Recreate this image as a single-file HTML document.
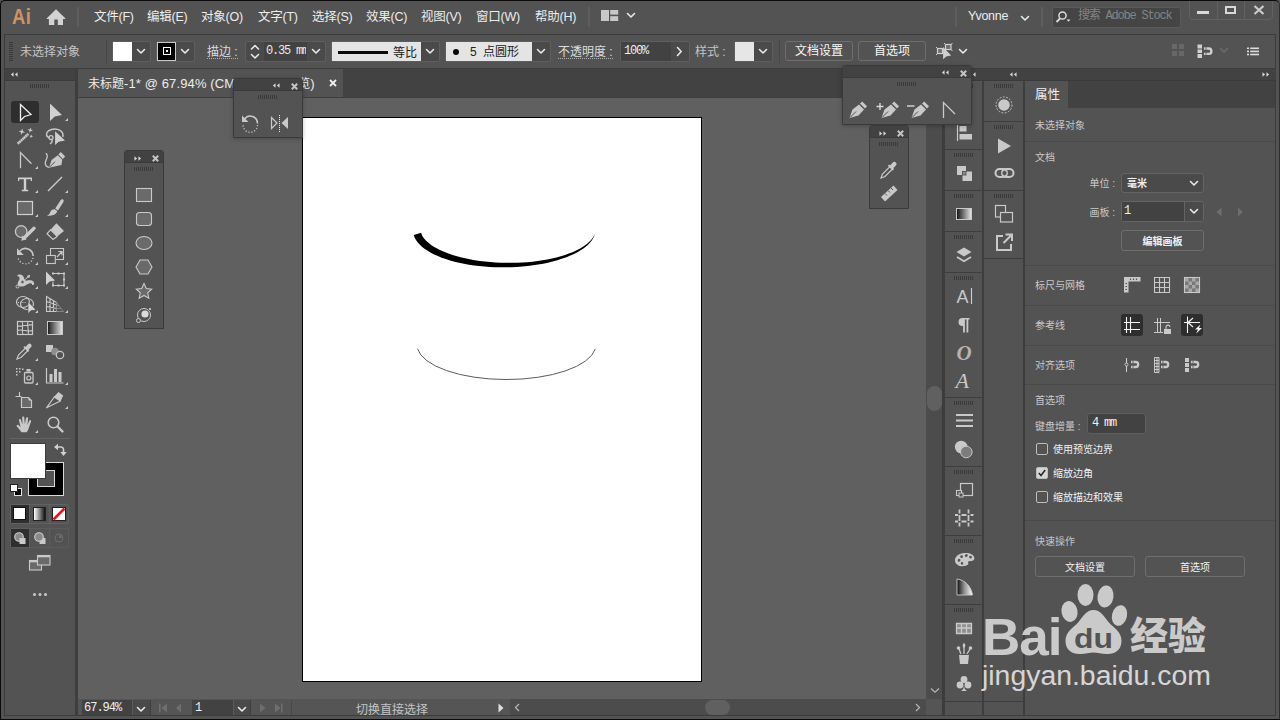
<!DOCTYPE html>
<html lang="zh-CN">
<head>
<meta charset="utf-8">
<title>Adobe Illustrator</title>
<style>
*{box-sizing:border-box;margin:0;padding:0}
html,body{width:1280px;height:720px;overflow:hidden;background:#535353}
body{position:relative;font-family:"Liberation Sans","Noto Sans CJK SC",sans-serif;font-size:12px;color:#dcdcdc;-webkit-font-smoothing:antialiased}
.abs{position:absolute}
div,span,svg{position:absolute}
.t{white-space:nowrap;line-height:1}
.menu{font-size:12.5px;color:#ececec;top:11px;letter-spacing:-.25px}
.sep{width:2px;background:#5e5e5e}
.grip{height:4px;background:repeating-linear-gradient(90deg,#3a3a3a 0 1px,transparent 1px 2px)}
.hdr{background:#424242}
.ddb{background:#4a4a4a;border:1px solid #5e5e5e;border-radius:2px}
.chev{fill:none;stroke:#e8e8e8;stroke-width:1.6;stroke-linecap:round;stroke-linejoin:round}
.ic{fill:#c8c8c8}
.ln{fill:none;stroke:#c8c8c8;stroke-width:1.3}
</style>
</head>
<body>
<!-- window frame -->
<div id="frame" style="left:0;top:0;width:1280px;height:720px;background:#535353"></div>

<!-- ===== MENU BAR ===== -->
<div id="menubar" style="left:0;top:0;width:1280px;height:34px;background:#535353">
  <span class="t" style="left:11.8px;top:5.5px;font-size:22.5px;color:#cf9263;font-weight:bold;transform:scaleX(.82);transform-origin:0 0;letter-spacing:.5px">Ai</span>
  <svg style="left:46px;top:9px" width="20" height="17" viewBox="0 0 20 17"><path d="M10 .300 L19.300 9.200 V10 H17 V16 H11.800 V10.500 H8.300 V16 H2.900 V10 H.800 V9.200 Z" fill="#d2d2d2"/></svg>
  <div class="sep" style="left:77px;top:7px;height:20px"></div>
  <span class="t menu" style="left:94px">文件(F)</span>
  <span class="t menu" style="left:147px">编辑(E)</span>
  <span class="t menu" style="left:201px">对象(O)</span>
  <span class="t menu" style="left:258px">文字(T)</span>
  <span class="t menu" style="left:312px">选择(S)</span>
  <span class="t menu" style="left:366px">效果(C)</span>
  <span class="t menu" style="left:421px">视图(V)</span>
  <span class="t menu" style="left:476px">窗口(W)</span>
  <span class="t menu" style="left:535px">帮助(H)</span>
  <div class="sep" style="left:588px;top:7px;height:20px"></div>
  <svg style="left:601px;top:10px" width="18" height="12" viewBox="0 0 18 12"><rect x="0" y="0" width="8" height="11" fill="#c8c8c8"/><rect x="9.200" y="0" width="8" height="4.600" fill="#c8c8c8"/><rect x="9.200" y="6.200" width="8" height="4.800" fill="#c8c8c8"/></svg>
  <svg style="left:626px;top:12px" width="10" height="7" viewBox="0 0 10 7"><path class="chev" d="M1.5 1.5 L5 5 L8.5 1.5"/></svg>
  <div class="sep" style="left:955px;top:7px;height:20px"></div>
  <span class="t menu" style="left:968px;top:10px">Yvonne</span>
  <svg style="left:1020px;top:15px" width="10" height="7" viewBox="0 0 10 7"><path class="chev" d="M1.5 1.5 L5 5 L8.5 1.5"/></svg>
  <div class="sep" style="left:1041px;top:7px;height:20px"></div>
  <div style="left:1052px;top:7px;width:129px;height:21px;background:#454545;border:1px solid #5a5a5a;border-radius:3px"></div>
  <svg style="left:1055px;top:10px" width="18" height="14" viewBox="0 0 18 14"><circle cx="7.5" cy="5.5" r="3.6" fill="none" stroke="#dcdcdc" stroke-width="1.5"/><path d="M5 8.5 L1.5 12" stroke="#dcdcdc" stroke-width="1.8" fill="none"/><path d="M11.5 9.5 h4 l-2 2.2z" fill="#dcdcdc"/></svg>
  <span class="t" style="left:1078px;top:10px;color:#848484;font-family:'Liberation Mono','Noto Sans CJK SC',monospace;font-size:12px;letter-spacing:-1.2px">搜索 Adobe Stock</span>
  <!-- window buttons -->
  <div style="left:1189px;top:-4px;width:84px;height:24px;border:1px solid #626262;border-radius:4px"></div>
  <div style="left:1217px;top:0;width:1px;height:19px;background:#626262"></div>
  <div style="left:1244px;top:0;width:1px;height:19px;background:#626262"></div>
  <div style="left:1197px;top:11px;width:12px;height:3px;background:#d8d8d8"></div>
  <div style="left:1225px;top:6px;width:11px;height:8px;border:2px solid #d8d8d8"></div>
  <svg style="left:1253px;top:5px" width="12" height="10" viewBox="0 0 12 10"><path d="M1.500 1 L10.500 9 M10.500 1 L1.500 9" stroke="#cccccc" stroke-width="2.200" fill="none"/></svg>
</div>

<!-- ===== CONTROL BAR ===== -->
<div id="ctrl" style="left:4px;top:34px;width:1272px;height:35px;background:#535353;border:1px solid #3c3c3c"></div>
<div id="ctrlitems" style="left:0;top:0;width:1280px;height:70px">
  <div style="left:9px;top:42px;width:4px;height:19px;background:repeating-linear-gradient(180deg,#3a3a3a 0 1px,transparent 1px 2px)"></div>
  <span class="t" style="left:20px;top:45.500px;font-size:12px;color:#c4c4c4">未选择对象</span>
  <div class="sep" style="left:106px;top:40px;height:23px;width:1px;background:#474747"></div>
  <!-- fill -->
  <div class="ddb" style="left:112px;top:41px;width:39px;height:21px"></div>
  <div style="left:113px;top:42px;width:19px;height:19px;background:#fff"></div>
  <svg style="left:136px;top:48px" width="10" height="7" viewBox="0 0 10 7"><path class="chev" d="M1.5 1.5 L5 5 L8.5 1.5"/></svg>
  <!-- stroke -->
  <div class="ddb" style="left:156px;top:41px;width:39px;height:21px"></div>
  <div style="left:157px;top:42px;width:19px;height:19px;background:#000;border:1px solid #c8c8c8"></div>
  <div style="left:163px;top:47px;width:8px;height:8px;border:1px solid #fff"></div>
  <div style="left:166px;top:50px;width:2px;height:2px;background:#fff"></div>
  <svg style="left:180px;top:48px" width="10" height="7" viewBox="0 0 10 7"><path class="chev" d="M1.5 1.5 L5 5 L8.5 1.5"/></svg>
  <span class="t" style="left:207px;top:46px;font-size:12px;color:#dcdcdc;border-bottom:1px dotted #b0b0b0;padding-bottom:0">描边 :</span>
  <!-- stroke width spinner -->
  <div class="ddb" style="left:245px;top:41px;width:81px;height:21px"></div>
  <div style="left:264px;top:42px;width:43px;height:19px;background:#424242"></div>
  <svg style="left:249.500px;top:44px" width="10" height="16" viewBox="0 0 10 16"><path class="chev" d="M1.500 5 L5 1.500 L8.500 5 M1.500 10.500 L5 14 L8.500 10.500"/></svg>
  <span class="t" style="left:266px;top:45px;font-size:12px;color:#e8e8e8;font-family:'Liberation Mono',monospace;letter-spacing:-1.2px;width:40px;overflow:hidden">0.35 mm</span>
  <svg style="left:311px;top:48px" width="10" height="7" viewBox="0 0 10 7"><path class="chev" d="M1.5 1.5 L5 5 L8.5 1.5"/></svg>
  <!-- profile -->
  <div class="ddb" style="left:331px;top:41px;width:109px;height:21px"></div>
  <div style="left:332px;top:42px;width:89px;height:19px;background:#e4e4e4"></div>
  <div style="left:338px;top:51px;width:50px;height:3px;background:#0a0a0a"></div>
  <span class="t" style="left:393px;top:47px;font-size:12px;color:#222">等比</span>
  <svg style="left:425px;top:48px" width="10" height="7" viewBox="0 0 10 7"><path class="chev" d="M1.5 1.5 L5 5 L8.5 1.5"/></svg>
  <!-- brush -->
  <div class="ddb" style="left:445px;top:41px;width:106px;height:21px"></div>
  <div style="left:446px;top:42px;width:86px;height:19px;background:#e4e4e4"></div>
  <div style="left:452.500px;top:48.500px;width:6px;height:6px;border-radius:50%;background:#0a0a0a"></div>
  <span class="t" style="left:470px;top:46px;font-size:12px;color:#222;word-spacing:3px">5 点圆形</span>
  <svg style="left:536px;top:48px" width="10" height="7" viewBox="0 0 10 7"><path class="chev" d="M1.5 1.5 L5 5 L8.5 1.5"/></svg>
  <span class="t" style="left:558px;top:46px;font-size:12px;color:#dcdcdc;border-bottom:1px dotted #b0b0b0;padding-bottom:0">不透明度 :</span>
  <div class="ddb" style="left:620px;top:41px;width:70px;height:21px"></div>
  <div style="left:621px;top:42px;width:50px;height:19px;background:#424242"></div>
  <span class="t" style="left:624px;top:45px;font-size:12px;color:#f0f0f0;font-family:'Liberation Mono',monospace;letter-spacing:-1.2px">100%</span>
  <svg style="left:676px;top:46px" width="7" height="11" viewBox="0 0 7 11"><path class="chev" d="M1.5 1.5 L5.2 5.5 L1.5 9.5"/></svg>
  <span class="t" style="left:695px;top:46px;font-size:12px;color:#c4c4c4">样式 :</span>
  <div class="ddb" style="left:734px;top:41px;width:39px;height:21px"></div>
  <div style="left:735px;top:42px;width:19px;height:19px;background:#e6e6e6"></div>
  <svg style="left:758px;top:48px" width="10" height="7" viewBox="0 0 10 7"><path class="chev" d="M1.5 1.5 L5 5 L8.5 1.5"/></svg>
  <div class="sep" style="left:779px;top:40px;height:23px;width:1px;background:#474747"></div>
  <div style="left:785px;top:41px;width:68px;height:20px;border:1px solid #6e6e6e;border-radius:3px"></div>
  <span class="t" style="left:785px;top:45px;width:68px;text-align:center;font-size:12px;color:#f6f6f6">文档设置</span>
  <div style="left:858px;top:41px;width:68px;height:20px;border:1px solid #6e6e6e;border-radius:3px"></div>
  <span class="t" style="left:858px;top:45px;width:68px;text-align:center;font-size:12px;color:#f6f6f6">首选项</span>
  <svg style="left:935px;top:42px" width="18" height="18" viewBox="935 42 18 18"><rect x="937.500" y="48.500" width="5" height="5" fill="#6e6e6e" stroke="#d0d0d0" stroke-width="1.200"/><path d="M936 47 l1.500 1.500 M936 55 l1.500-1.500" stroke="#d0d0d0" stroke-width="1"/><rect x="945.500" y="44.500" width="5.500" height="5" fill="#6e6e6e" stroke="#d0d0d0" stroke-width="1.200"/><path d="M944 43 l1.500 1.500 M952.500 43 l-1.500 1.500 M952.500 51 l-1.500-1.500" stroke="#d0d0d0" stroke-width="1"/><path d="M943.100 47 V59.300 L946.200 56.500 L951.200 55.400 Z" fill="#d0d0d0"/></svg>
  <svg style="left:957.500px;top:47.500px" width="10" height="7" viewBox="0 0 10 7"><path class="chev" d="M1.500 1.500 L5 5 L8.500 1.500"/></svg>
  <!-- right icons -->
  <svg style="left:1170px;top:42px" width="18" height="18" viewBox="0 0 18 18"><g fill="#686868"><rect x="2" y="2" width="5" height="5"/><rect x="9" y="2" width="5" height="5"/><rect x="2" y="9" width="5" height="5"/><rect x="9" y="9" width="5" height="5"/></g></svg>
  <svg style="left:1196px;top:42px" width="18" height="18" viewBox="0 0 18 18"><g fill="#d0d0d0"><rect x="1.500" y="2.500" width="4.500" height="4"/><rect x="1.500" y="7.500" width="4.500" height="3.500"/><rect x="1.500" y="12" width="4.500" height="4"/></g><path d="M8 6.500 h4.700 a2.700 2.700 0 0 1 0 5.400 H8" fill="none" stroke="#d0d0d0" stroke-width="2.300"/><path d="M10 5 v3 M10 10.400 v3" stroke="#535353" stroke-width=".8"/></svg>
  <svg style="left:1219px;top:47px" width="10" height="7" viewBox="0 0 10 7"><path class="chev" style="stroke:#6c6c6c" d="M1.5 1.5 L5 5 L8.5 1.5"/></svg>
  <svg style="left:1246.500px;top:47px" width="12" height="9" viewBox="0 0 12 9"><g fill="#dcdcdc"><rect x="0" y=".500" width="2" height="1.600"/><rect x="3.200" y=".500" width="8.800" height="1.600"/><rect x="0" y="3.600" width="2" height="1.600"/><rect x="3.200" y="3.600" width="8.800" height="1.600"/><rect x="0" y="6.700" width="2" height="1.600"/><rect x="3.200" y="6.700" width="8.800" height="1.600"/></g></svg>
</div>

<!-- ===== TOOLBOX ===== -->
<div id="toolbox" style="left:4px;top:69px;width:74px;height:647px;background:#535353;border-left:1px solid #3c3c3c;border-right:3px solid #3e3e3e;border-bottom:1px solid #3c3c3c">
  <div class="hdr" style="left:0;top:0;width:70px;height:12px;border-bottom:1px solid #3c3c3c"></div>
  <svg style="left:5px;top:3px" width="8" height="5" viewBox="0 0 9 7" preserveAspectRatio="none"><path d="M4 .500 L1 3.500 L4 6.500z M8.500 .500 L5.500 3.500 L8.500 6.500z" fill="#d6d6d6"/></svg>
  <div class="grip" style="left:25px;top:15px;width:20px"></div>
  <div style="left:6px;top:32px;width:28px;height:22px;background:#2e2e2e;border-radius:3px"></div>
  <div style="left:5px;top:369px;width:60px;height:1px;background:#626262"></div>
</div>
<svg id="tools" style="left:0;top:95px" width="80" height="345" viewBox="0 95 80 345">
  <g fill="#c9c9c9" stroke="none">
    <!-- sub-tool corner markers -->
    <path d="M68 118v3h-3z M38 166v3h-3z M38 190v3h-3z M68 190v3h-3z M38 214v3h-3z M68 214v3h-3z M38 238v3h-3z M68 238v3h-3z M38 262v3h-3z M68 262v3h-3z M38 286v3h-3z M68 286v3h-3z M38 310v3h-3z M68 310v3h-3z M38 358v3h-3z M38 382v3h-3z M68 382v3h-3z M68 406v3h-3z M38 430v3h-3z"/>
  </g>
  <!-- row1: selection / direct selection -->
  <path d="M20.5 104.5 L20.5 120.5 L24.5 116.5 L31 114.5 Z" fill="none" stroke="#f0f0f0" stroke-width="1.3" stroke-linejoin="miter"/>
  <path d="M50 103.5 L50 121 L54.8 116.6 L62 115 Z" fill="#d0d0d0"/>
  <!-- row2: magic wand / lasso -->
  <path d="M17.700 143.800 L28.300 133.900" stroke="#c9c9c9" stroke-width="2.600" fill="none" stroke-dasharray="1.800 .35"/>
  <path d="M22.6 128.4 L22.8 131.1 L25.1 132.5 L22.4 132.7 L21.0 135.0 L20.8 132.3 L18.5 130.9 L21.2 130.7Z M31.0 127.5 L31.2 129.7 L33.0 130.9 L30.8 131.1 L29.6 132.9 L29.4 130.7 L27.6 129.5 L29.8 129.3Z M31.7 134.5 L31.9 136.0 L33.1 136.9 L31.6 137.1 L30.7 138.3 L30.5 136.8 L29.3 135.9 L30.8 135.7Z" fill="#c9c9c9"/>
  <path d="M62.800 137 c1.200-4.500-2.500-8-8-8 c-5 0-8.300 2.600-8.300 5.600 c0 1.600 1.200 2.800 3 3.200" fill="none" stroke="#c9c9c9" stroke-width="1.400"/>
  <circle cx="51" cy="137.600" r="2" fill="none" stroke="#c9c9c9" stroke-width="1.300"/>
  <path d="M51.800 139.600 c.8 1.600 .2 3-1.400 4" fill="none" stroke="#c9c9c9" stroke-width="1.400" stroke-linecap="round"/>
  <path d="M55.100 131.200 L55.100 145 L58.600 141.800 L65 140.400 Z" fill="#d0d0d0"/>
  <!-- row3: anchor point / curvature -->
  <path d="M20.500 168.200 L20.500 152.600 L31.500 163.800" fill="none" stroke="#c9c9c9" stroke-width="1.300"/>
  <path d="M46.200 153.400 c3.200 2.800-.8 6.200-.9 9.500 c-.1 2.600 1.500 3.800 3.600 4.400" fill="none" stroke="#c9c9c9" stroke-width="1.300" stroke-linecap="round"/>
  <path d="M48.900 167.800 L51.600 160 L57.800 155.200 L62.300 159.700 L61.400 165 Z" fill="#c9c9c9"/>
  <path d="M58.400 154.400 L60.800 152 L65.200 156.600 L62.800 159 Z" fill="#c9c9c9"/>
  <path d="M49.400 167.300 L55 161.600" stroke="#535353" stroke-width="1" fill="none"/>
  <!-- row4: type / line -->
  <path d="M18 177.500 h14 v3.500 h-1.200 v-1.800 h-4.600 v10.600 h2 v1.400 h-6.400 v-1.400 h2 v-10.600 h-4.600 v1.800 h-1.200z" fill="#d0d0d0"/>
  <path d="M48 191 L62 177" stroke="#c9c9c9" stroke-width="1.4" fill="none"/>
  <!-- row5: rectangle / paintbrush -->
  <rect x="17.500" y="201.500" width="15" height="13" fill="#6a6a6a" stroke="#d0d0d0" stroke-width="1.2"/>
  <path d="M62.800 199.300 c.9.500 1.100 1.500.6 2.600 l-5.400 8.600 -2.800-1.900 5.400-8.400 c.6-.9 1.500-1.300 2.200-.9z M54.600 209.300 l2.600 1.800 c-.6 2.800-3 4.800-10.400 4.900 c2.600-1.200 2.800-2.600 3.800-4.400 c.9-1.600 2.300-2.500 4-2.300z" fill="#c9c9c9"/>
  <!-- row6: shaper / eraser -->
  <circle cx="21.200" cy="231.500" r="5.800" fill="#6a6a6a" stroke="#c9c9c9" stroke-width="1.300"/>
  <path d="M34 228.300 L24.600 237.600" stroke="#c9c9c9" stroke-width="3.400" stroke-linecap="round" fill="none"/>
  <path d="M22.500 235.500 L26.600 239.600 L21.200 240.800 Z" fill="#c9c9c9"/>
  <path d="M56.400 223.200 L64 231.100 L57.100 236.400 L50.500 229.800 Z" fill="#c9c9c9"/>
  <path d="M50.500 229.800 L57.100 236.400 L52.900 239.400 L47.100 233.700 Z" fill="#535353" stroke="#c9c9c9" stroke-width="1.200" stroke-linejoin="round"/>
  <!-- row7: rotate / scale -->
  <path d="M19.800 251 a7.600 7.600 0 0 1 13.300 5" fill="none" stroke="#c9c9c9" stroke-width="1.600"/>
  <path d="M17 248.300 v6.800 h6.800z" fill="#c9c9c9"/>
  <path d="M33 257.800 a7.600 7.600 0 0 1 -14.800 .5" fill="none" stroke="#c9c9c9" stroke-width="1.300" stroke-dasharray="1.200 1.900"/>
  <rect x="46.500" y="255.500" width="8.800" height="8" fill="none" stroke="#c9c9c9" stroke-width="1.100"/>
  <path d="M50.500 255 v-6.500 h13 v11 h-8" fill="none" stroke="#c9c9c9" stroke-width="1.100"/>
  <path d="M57 257 L61.500 252 M58.300 251.500 h3.700 v3.700" fill="none" stroke="#c9c9c9" stroke-width="1.200"/>
  <!-- row8: width(warp) / free transform -->
  <path d="M19 274.500 c2.500-.5 4.500 1 5 3.500 c.4 2 1.500 3 3.500 2.500 c2.500-.6 5.500-.5 6.500 2 c.6 1.600-.4 3-2 2.500 c.3-1.500-1-2.200-2.800-1.600 c-3 1-4.500 3.500-8.500 3 c-2.500-.3-3.500-2-2.800-4 c.6-1.800 2-2.500 1.600-4.500 c-.2-1.200-1-1.800-2.200-1.500 c-.3-1 .5-1.700 1.700-1.900z" fill="#c9c9c9"/>
  <path d="M17.500 286.500 L30 275" stroke="#c9c9c9" stroke-width="1" fill="none"/>
  <circle cx="17.500" cy="286.500" r="1.500" fill="#535353" stroke="#c9c9c9" stroke-width="1"/><circle cx="28.500" cy="276.500" r="1.300" fill="#c9c9c9"/>
  <circle cx="22.500" cy="282" r="1.700" fill="#535353" stroke="#c9c9c9" stroke-width=".9"/>
  <path d="M46 271.500 L46 285 L49.500 281.500 L55 280.500 Z" fill="#d0d0d0"/>
  <path d="M53 273.500 h11 v12 h-11 v-4" fill="none" stroke="#c9c9c9" stroke-width="1.100"/>
  <path d="M57.500 272.500h2v2h-2z M57.500 284.500h2v2h-2z M63 278.500h2v2h-2z" fill="#c9c9c9"/>
  <path d="M52 272.500h2v2h-2z M63 272.500h2v2h-2z M52 284.500h2v2h-2z M63 284.500h2v2h-2z" fill="#c9c9c9"/>
  <!-- row9: shape builder / perspective grid -->
  <ellipse cx="23" cy="302" rx="6.500" ry="5.500" fill="none" stroke="#c9c9c9" stroke-width="1.200"/>
  <ellipse cx="27" cy="304" rx="6.500" ry="5.500" fill="none" stroke="#c9c9c9" stroke-width="1.200"/>
  <path d="M18 302.500 h8" stroke="#c9c9c9" stroke-width="1.200" stroke-dasharray="1 1.200" fill="none"/>
  <path d="M28 301.500 L28 313.500 L31 310.500 L36 310 Z" fill="#d8d8d8" stroke="#535353" stroke-width=".6"/>
  <path d="M46.500 311.500 v-15 l10 6 v9 z M50 298.500 v13 M53.500 300.500 v11 M46.500 301.500 l10 3.500 M46.500 306.500 l10 2" fill="none" stroke="#c9c9c9" stroke-width="1.100"/>
  <path d="M56.500 302.500 l7 9 h-7z" fill="none" stroke="#8a8a8a" stroke-width=".9"/>
  <path d="M56.500 305.500 h2.500 M56.500 308.500 h4.800" stroke="#8a8a8a" stroke-width=".9" fill="none"/>
  <!-- row10: mesh / gradient -->
  <rect x="17.500" y="321.500" width="15" height="13" fill="none" stroke="#c9c9c9" stroke-width="1.200"/>
  <path d="M17.500 326 c5 1 10-2 15-1 M17.500 330.500 c5-2 10 2 15 0 M22 321.500 c2 4-1 9 1 13 M28 321.500 c-2 4 2 9 0 13" fill="none" stroke="#c9c9c9" stroke-width="1.100"/>
  <defs><linearGradient id="g1" x1="0" x2="1" y1="0" y2="0"><stop offset="0" stop-color="#1a1a1a"/><stop offset="1" stop-color="#e8e8e8"/></linearGradient></defs>
  <rect x="47.500" y="321.500" width="15" height="13" fill="url(#g1)" stroke="#c9c9c9" stroke-width="1"/>
  <!-- row11: eyedropper / blend -->
  <path d="M17 359 l1.500-4 l7.500-7.500 l2.500 2.500 l-7.500 7.500 z" fill="none" stroke="#c9c9c9" stroke-width="1.200"/>
  <path d="M25.500 347 l2.500-2.800 a2 2 0 0 1 3 3 l-2.800 2.500 l1 1 -1.200 1.200 -4.600-4.600 1.200-1.200z" fill="#c9c9c9"/>
  <rect x="46" y="345" width="7" height="7" fill="#c9c9c9"/>
  <circle cx="55" cy="351.500" r="3.800" fill="#8e8e8e"/>
  <circle cx="60" cy="355" r="3.700" fill="#535353" stroke="#c9c9c9" stroke-width="1.200"/>
  <!-- row12: symbol sprayer / graph -->
  <path d="M16 368h1.500v1.500h-1.500z M19 368h1.500v1.500h-1.500z M16 371h1.500v1.500h-1.500z M19 371h1.500v1.500h-1.500z M16 374h1.500v1.500h-1.500z M22 368.500h1.500v1.500h-1.500z" fill="#c9c9c9"/>
  <path d="M26.500 369 h4 v2.500 h-4z" fill="#c9c9c9"/>
  <rect x="24.500" y="372.500" width="8.500" height="10.500" rx="1" fill="none" stroke="#c9c9c9" stroke-width="1.300"/>
  <circle cx="28.800" cy="378" r="2" fill="none" stroke="#c9c9c9" stroke-width="1.200"/>
  <path d="M46.500 368 v15 h17" fill="none" stroke="#c9c9c9" stroke-width="1.200"/>
  <path d="M49.500 374h3v8h-3z M54 369h3v13h-3z M58.500 372h3v10h-3z" fill="#c9c9c9"/>
  <!-- row13: artboard / slice -->
  <path d="M15.500 396.500 h6 M19.500 392 v5" stroke="#c9c9c9" stroke-width="1.100" fill="none"/>
  <path d="M21.500 397.500 h7 l3 3 v7 h-10z" fill="#6a6a6a" stroke="#c9c9c9" stroke-width="1.200"/>
  <path d="M28.500 397.500 v3 h3z" fill="#c9c9c9"/>
  <path d="M46.500 407.800 L54.300 397 L60.400 401 Z" fill="none" stroke="#c9c9c9" stroke-width="1.200" stroke-linejoin="round"/>
  <path d="M54 396.800 L58.500 392 L63.200 395.400 L60.600 401.200 Z" fill="#c9c9c9"/>
  <!-- row14: hand / zoom -->
  <path d="M21.500 432.300 c-1.200-1.800-3.400-4.300-4.600-5.800 c-.8-1.100.5-2.200 1.700-1.300 l2 1.700 -1.600-6.400 c-.4-1.500 1.500-2 2-.6 l1.500 4.600 -.3-7 c0-1.500 2-1.500 2.100 0 l.5 6.800 1.300-6.200 c.3-1.400 2.200-1.100 2 .4 l-.8 6.600 1.900-4.300 c.6-1.300 2.300-.6 1.800.8 l-2 5.800 c-.6 1.900-1.300 3.500-2.300 4.900z" fill="#c9c9c9"/>
  <circle cx="53.500" cy="422.500" r="5.300" fill="none" stroke="#c9c9c9" stroke-width="1.600"/>
  <path d="M57.500 426.500 L62.500 431.500" stroke="#c9c9c9" stroke-width="2.400" stroke-linecap="round" fill="none"/>
</svg>
<!-- fill / stroke -->
<div id="fs" style="left:0;top:440px;width:80px;height:170px">
  <div style="left:28px;top:22px;width:36px;height:34px;background:#000;border:1px solid #d8d8d8"></div>
  <div style="left:37px;top:30px;width:18px;height:17px;background:#535353;border:1px solid #d8d8d8"></div>
  <div style="left:10px;top:3px;width:36px;height:36px;background:#fff;border:1px solid #3c3c3c"></div>
  <svg style="left:53px;top:3px" width="14" height="14" viewBox="0 0 14 14"><path d="M3.500 4 h4.500 a2.500 2.500 0 0 1 2.500 2.500 v3.500" fill="none" stroke="#d0d0d0" stroke-width="1.600"/><path d="M1 4 l4-3.200 v6.400z M10.500 13 l-3.200-4 h6.400z" fill="#d0d0d0"/></svg>
  <div style="left:14px;top:48px;width:8px;height:8px;background:#000;border:1px solid #e0e0e0"></div>
  <div style="left:10px;top:44px;width:8px;height:8px;background:#fff;border:1px solid #222"></div>
  <!-- color mode buttons -->
  <div style="left:10px;top:64px;width:59px;height:20px;border:1px solid #626262;border-radius:2px"></div>
  <div style="left:11px;top:65px;width:18px;height:18px;background:#2e2e2e"></div>
  <div style="left:29px;top:65px;width:1px;height:18px;background:#626262"></div>
  <div style="left:49px;top:65px;width:1px;height:18px;background:#626262"></div>
  <div style="left:13px;top:67px;width:13px;height:13px;background:#fff;border:1px solid #111"></div>
  <div style="left:33px;top:67px;width:13px;height:14px;background:linear-gradient(90deg,#fff,#111);border:1px solid #222"></div>
  <svg style="left:52px;top:67px" width="14" height="14" viewBox="0 0 14 14"><rect x=".5" y=".5" width="13" height="13" fill="#fff" stroke="#222"/><path d="M1.500 12.500 L12.500 1.500" stroke="#e8141c" stroke-width="2.600"/></svg>
  <!-- draw modes -->
  <div style="left:10px;top:88px;width:59px;height:20px;border:1px solid #5c5c5c;border-radius:2px"></div>
  <div style="left:11px;top:89px;width:18px;height:18px;background:#2e2e2e"></div>
  <div style="left:29px;top:89px;width:1px;height:18px;background:#5c5c5c"></div>
  <div style="left:49px;top:89px;width:1px;height:18px;background:#5c5c5c"></div>
  <svg style="left:11px;top:89px" width="58" height="18" viewBox="0 0 58 18"><circle cx="8" cy="8" r="4.300" fill="#8a8a8a" stroke="#d0d0d0" stroke-width="1.100"/><rect x="8.500" y="9" width="6" height="6" fill="#c9c9c9"/><rect x="28.500" y="9" width="6" height="6" fill="#c9c9c9"/><circle cx="28" cy="8" r="4.300" fill="#8a8a8a" stroke="#d0d0d0" stroke-width="1.100"/><circle cx="48" cy="9" r="4" fill="none" stroke="#6c6c6c" stroke-width="1"/><path d="M48 9 v-3 a3 3 0 0 1 3 3z" fill="#6c6c6c"/></svg>
  <!-- screen mode -->
  <svg style="left:28px;top:114px" width="24" height="18" viewBox="0 0 24 18"><rect x="1.500" y="6.500" width="12" height="9.500" fill="#6a6a6a" stroke="#c9c9c9" stroke-width="1.100"/><path d="M1.500 7.500h12" stroke="#c9c9c9" stroke-width="1.600"/><rect x="9.500" y="1.500" width="12.500" height="9.500" fill="#6a6a6a" stroke="#c9c9c9" stroke-width="1.100"/><path d="M9.500 2.500h12.500" stroke="#c9c9c9" stroke-width="1.600"/></svg>
  <svg style="left:32px;top:152px" width="16" height="5" viewBox="0 0 16 5"><circle cx="2.500" cy="2.500" r="1.500" fill="#c9c9c9"/><circle cx="8" cy="2.500" r="1.500" fill="#c9c9c9"/><circle cx="13.500" cy="2.500" r="1.500" fill="#c9c9c9"/></svg>
</div>

<!-- ===== DOCUMENT AREA ===== -->
<div id="doc" style="left:78px;top:69px;width:866px;height:647px;background:#606060;overflow:hidden;border-bottom:1px solid #3c3c3c">
  <!-- tab bar -->
  <div style="left:0;top:0;width:866px;height:28px;background:#424242"></div>
  <div style="left:0;top:0;width:265px;height:28px;background:#535353"></div>
  <span class="t" style="left:10px;top:8px;font-size:13px;color:#ececec;letter-spacing:.12px"><span style="position:static;font-size:12px;letter-spacing:0">未标题</span>-1* @ 67.94% (CM<span style="position:static;letter-spacing:-.25px">YK/GPU </span><span style="position:static;font-size:12px;letter-spacing:0">预览</span>)</span>
  <svg style="left:251px;top:10px" width="8" height="8" viewBox="0 0 8 8"><path d="M1 1 L7 7 M7 1 L1 7" stroke="#f0f0f0" stroke-width="1.800" fill="none"/></svg>
  <div style="left:0;top:28px;width:866px;height:1px;background:#3e3e3e"></div>
  <!-- artboard -->
  <div style="left:224px;top:48px;width:400px;height:565px;background:#fff;border:1px solid #000"></div>
  <svg style="left:225px;top:49px" width="398" height="563" viewBox="303 118 398 563">
    <path d="M413.69 235.08 L414.73 237.66 L416.13 240.14 L417.86 242.50 L419.89 244.75 L422.22 246.89 L424.83 248.93 L427.70 250.87 L430.83 252.72 L434.21 254.47 L437.84 256.12 L441.69 257.67 L445.76 259.11 L450.04 260.45 L454.50 261.68 L459.15 262.80 L463.95 263.80 L468.90 264.68 L473.98 265.45 L479.16 266.08 L484.44 266.59 L489.79 266.97 L495.20 267.23 L500.64 267.35 L506.10 267.34 L511.55 267.20 L516.99 266.93 L522.37 266.53 L527.70 266.00 L532.94 265.34 L538.09 264.56 L543.12 263.65 L548.00 262.63 L552.74 261.49 L557.30 260.23 L561.67 258.87 L565.84 257.40 L569.78 255.84 L573.49 254.18 L576.95 252.43 L580.15 250.60 L583.07 248.70 L585.71 246.73 L588.04 244.69 L590.06 242.61 L591.76 240.48 L593.12 238.32 L594.14 236.14 L594.78 233.96 L594.78 233.96 L593.82 236.00 L592.60 238.00 L591.09 239.96 L589.28 241.87 L587.19 243.74 L584.81 245.55 L582.15 247.30 L579.22 248.99 L576.03 250.61 L572.59 252.15 L568.90 253.61 L564.99 254.98 L560.86 256.25 L556.53 257.42 L552.02 258.49 L547.34 259.46 L542.52 260.30 L537.56 261.04 L532.49 261.65 L527.32 262.14 L522.08 262.51 L516.78 262.75 L511.45 262.87 L506.10 262.86 L500.75 262.72 L495.43 262.46 L490.15 262.06 L484.93 261.55 L479.80 260.91 L474.77 260.15 L469.87 259.27 L465.10 258.28 L460.49 257.18 L456.07 255.97 L451.83 254.67 L447.82 253.27 L444.03 251.78 L440.48 250.21 L437.20 248.57 L434.19 246.88 L431.47 245.13 L429.06 243.34 L426.95 241.54 L425.16 239.73 L423.70 237.94 L422.55 236.18 L421.71 234.48 L421.16 232.84 Z" fill="#000"/>
    <path d="M417.500 348.700 A89.500 34.800 0 0 0 595.200 349.100" fill="none" stroke="#5c5c5c" stroke-width="1"/>
  </svg>
  <!-- vertical scrollbar -->
  <div style="left:848px;top:29px;width:16px;height:601px;background:#4c4c4c"></div>
  <div style="left:864px;top:29px;width:2px;height:618px;background:#3c3c3c"></div>
  <div style="left:849px;top:317px;width:15px;height:25px;background:#606060;border-radius:7.500px"></div>
  <svg style="left:852px;top:618px" width="10" height="7" viewBox="0 0 10 7"><path d="M1 1.500 L5 5.200 L9 1.500" fill="none" stroke="#b4b4b4" stroke-width="1.300"/></svg>
  <!-- status bar -->
  <div style="left:0;top:630px;width:864px;height:16px;background:#555555"></div>
  <div style="left:432px;top:630px;width:416px;height:16px;background:#4c4c4c"></div>
  <div style="left:4px;top:631px;width:50px;height:15px;background:#424242"></div>
  <span class="t" style="left:6px;top:633px;font-size:12px;font-family:'Liberation Mono',monospace;color:#f0f0f0;letter-spacing:-1px">67.94%</span>
  <div style="left:54px;top:631px;width:19px;height:15px;background:#4a4a4a;border-left:1px solid #5a5a5a;border-right:1px solid #3e3e3e"></div>
  <svg style="left:58px;top:637px" width="10" height="7" viewBox="0 0 10 7"><path class="chev" d="M1.500 1.500 L5 5 L8.500 1.500"/></svg>
  <svg style="left:80px;top:634px" width="26" height="10" viewBox="0 0 26 10"><path d="M1 .5h1.600v9H1z M9 .5 v9 L3.500 5z M23 .5 v9 L18 5z" fill="#6e6e6e"/></svg>
  <div style="left:114px;top:631px;width:41px;height:15px;background:#424242"></div>
  <span class="t" style="left:117px;top:633px;font-size:12px;font-family:'Liberation Mono',monospace;color:#f0f0f0">1</span>
  <div style="left:155px;top:631px;width:18px;height:15px;background:#4a4a4a;border-left:1px solid #5a5a5a;border-right:1px solid #3e3e3e"></div>
  <svg style="left:159px;top:637px" width="10" height="7" viewBox="0 0 10 7"><path class="chev" d="M1.500 1.500 L5 5 L8.500 1.500"/></svg>
  <svg style="left:181px;top:634px" width="26" height="10" viewBox="0 0 26 10"><path d="M1 .5 v9 L6.500 5z M16 .5 v9 L21.500 5z M22 .5h1.600v9H22z" fill="#6e6e6e"/></svg>
  <div style="left:213px;top:631px;width:1px;height:15px;background:#484848"></div>
  <span class="t" style="left:214px;top:635px;width:200px;text-align:center;font-size:12px;color:#c4c4c4">切换直接选择</span>
  <svg style="left:420px;top:634px" width="6" height="10" viewBox="0 0 6 10"><path d="M.500 .500 v9 L5.500 5z" fill="#e0e0e0"/></svg>
  <svg style="left:436px;top:634px" width="7" height="9" viewBox="0 0 7 9"><path d="M5 1 L1.500 4.500 L5 8" fill="none" stroke="#b4b4b4" stroke-width="1.300"/></svg>
  <svg style="left:836px;top:634px" width="7" height="9" viewBox="0 0 7 9"><path d="M2 1 L5.500 4.500 L2 8" fill="none" stroke="#b4b4b4" stroke-width="1.300"/></svg>
  <div style="left:627px;top:631px;width:25px;height:15px;background:#606060;border-radius:7.500px"></div>
</div>

<!-- ===== RIGHT DOCKS ===== -->
<div id="rdock" style="left:944px;top:69px;width:332px;height:647px;background:#3e3e3e"></div>
<div class="hdr" style="left:944px;top:69px;width:332px;height:12px;background:#424242;border-bottom:1px solid #3a3a3a"></div>
<svg style="left:1009px;top:72px" width="8" height="5" viewBox="0 0 9 7" preserveAspectRatio="none"><path d="M4 .500 L1 3.500 L4 6.500z M8.500 .500 L5.500 3.500 L8.500 6.500z" fill="#d6d6d6"/></svg>
<svg style="left:968px;top:72px" width="8" height="5" viewBox="0 0 9 7" preserveAspectRatio="none"><path d="M4 .500 L1 3.500 L4 6.500z M8.500 .500 L5.500 3.500 L8.500 6.500z" fill="#d6d6d6"/></svg>
<svg style="left:1262px;top:72px" width="8" height="5" viewBox="0 0 9 7" preserveAspectRatio="none"><path d="M.500 .500 L3.500 3.500 L.500 6.500z M5 .500 L8 3.500 L5 6.500z" fill="#d6d6d6"/></svg>
<!-- column 1 -->
<div id="col1" style="left:945px;top:81px;width:37px;height:634px;background:#535353">
  <div style="left:0;top:68px;width:38px;height:1px;background:#3e3e3e"></div>
  <div style="left:0;top:109px;width:38px;height:1px;background:#3e3e3e"></div>
  <div style="left:0;top:150px;width:38px;height:1px;background:#3e3e3e"></div>
  <div style="left:0;top:191px;width:38px;height:1px;background:#3e3e3e"></div>
  <div style="left:0;top:316px;width:38px;height:1px;background:#3e3e3e"></div>
  <div style="left:0;top:385px;width:38px;height:1px;background:#3e3e3e"></div>
  <div style="left:0;top:454px;width:38px;height:1px;background:#3e3e3e"></div>
  <div style="left:0;top:523px;width:38px;height:1px;background:#3e3e3e"></div>
  <div style="left:0;top:620px;width:38px;height:1px;background:#3e3e3e"></div>
  <div class="grip" style="left:9px;top:3px;width:20px"></div>
  <div class="grip" style="left:9px;top:72px;width:20px"></div>
  <div class="grip" style="left:9px;top:113px;width:20px"></div>
  <div class="grip" style="left:9px;top:154px;width:20px"></div>
  <div class="grip" style="left:9px;top:195px;width:20px"></div>
  <div class="grip" style="left:9px;top:320px;width:20px"></div>
  <div class="grip" style="left:9px;top:389px;width:20px"></div>
  <div class="grip" style="left:9px;top:458px;width:20px"></div>
  <div class="grip" style="left:9px;top:527px;width:20px"></div>
</div>
<svg id="col1icons" style="left:945px;top:81px" width="38" height="635" viewBox="945 81 38 635">
  <!-- align -->
  <path d="M957.500 124 v17" stroke="#c9c9c9" stroke-width="1.200" fill="none"/>
  <rect x="959.500" y="126" width="7" height="5.500" fill="#c9c9c9"/><rect x="959.500" y="134" width="12.500" height="5.500" fill="#c9c9c9"/>
  <!-- pathfinder -->
  <rect x="957" y="166" width="9" height="9" fill="#c9c9c9"/><rect x="962.500" y="171.500" width="9.500" height="9.500" fill="#c9c9c9"/><rect x="962.500" y="171.500" width="3.500" height="3.500" fill="#8a8a8a" stroke="#535353" stroke-width=".9"/>
  <!-- gradient -->
  <defs><linearGradient id="g2" x1="0" x2="1"><stop offset="0" stop-color="#101010"/><stop offset="1" stop-color="#e8e8e8"/></linearGradient></defs>
  <rect x="956.500" y="208.500" width="15" height="11" fill="url(#g2)" stroke="#c9c9c9" stroke-width="1"/>
  <!-- layers -->
  <path d="M964 247.500 l7.500 4.500 -7.500 4.500 -7.500-4.500z" fill="#c9c9c9"/>
  <path d="M957 257 l7 4.200 7-4.200" fill="none" stroke="#c9c9c9" stroke-width="1.800"/>
  <!-- character A| -->
  <text x="956.500" y="303" font-family="Liberation Sans, sans-serif" font-size="18" fill="#c9c9c9">A</text>
  <path d="M971.500 288 v16" stroke="#c9c9c9" stroke-width="1.200"/>
  <!-- paragraph -->
  <path d="M962.500 318 h7 v1.600 h-1.200 v13 h-1.800 v-13 h-1.600 v13 h-1.800 v-6.600 h-.6 a4 4 0 0 1 0-8z" fill="#c9c9c9"/>
  <!-- opentype O -->
  <text x="956.500" y="360" font-family="Liberation Serif, serif" font-size="21" font-style="italic" font-weight="bold" fill="#b4b4b4">O</text>
  <!-- glyphs A -->
  <text x="955.500" y="388" font-family="Liberation Serif, serif" font-size="22" font-style="italic" fill="#c9c9c9">A</text>
  <!-- stroke -->
  <path d="M956 415 h17 M956 420.500 h17 M956 426 h17" stroke="#c9c9c9" stroke-width="2" fill="none"/>
  <!-- transparency -->
  <circle cx="961.200" cy="447" r="6.300" fill="#c9c9c9"/><circle cx="966.300" cy="452" r="5.800" fill="#7c7c7c" stroke="#c9c9c9" stroke-width="1"/>
  <!-- transform? -->
  <rect x="960.500" y="483.500" width="12" height="12" fill="none" stroke="#c9c9c9" stroke-width="1.200"/>
  <rect x="956.500" y="490.500" width="5" height="5" fill="#535353" stroke="#c9c9c9" stroke-width="1.100"/><rect x="959" y="493" width="4" height="4" fill="#535353" stroke="#c9c9c9" stroke-width="1"/>
  <!-- align grid -->
  <path d="M959.500 509.500 v17 M968.500 509.500 v17" stroke="#c9c9c9" stroke-width="1.800" stroke-dasharray="4 1.500 6 1.500 4" fill="none"/>
  <path d="M955 515 h3 M961.500 515 h5 M970.500 515 h3 M955 521.500 h3 M961.500 521.500 h5 M970.500 521.500 h3" stroke="#c9c9c9" stroke-width="1.800" fill="none"/>
  <!-- color palette -->
  <g transform="rotate(-8 964.500 559.500)"><path d="M964.500 553 c5.500 0 10 2.600 10 6.200 c0 2.600-2.600 3-4.600 2.700 c-1.800-.3-2.600 .5-2.200 1.700 c.4 1.400-1.200 2.400-4 2.400 c-5 0-8.800-2.600-8.800-6.400 c0-3.800 4.200-6.600 9.600-6.600z" fill="#c9c9c9"/>
  <circle cx="959" cy="559.500" r="1.400" fill="#535353"/><circle cx="962" cy="556.300" r="1.400" fill="#535353"/><circle cx="966.800" cy="555.800" r="1.400" fill="#535353"/><circle cx="970.800" cy="558" r="1.400" fill="#535353"/><circle cx="961.500" cy="563" r="1.300" fill="#535353"/></g>
  <!-- color guide -->
  <defs><linearGradient id="g3" x1="0" x2="1" y1="0" y2="0"><stop offset="0" stop-color="#0c0c0c"/><stop offset=".45" stop-color="#8a8a8a"/><stop offset="1" stop-color="#ffffff"/></linearGradient></defs>
  <path d="M957 595 v-16 c8 1 14 7 15.500 16z" fill="url(#g3)" stroke="#c9c9c9" stroke-width=".9"/>
  <!-- swatches -->
  <path d="M956.500 623.500 h15 v10 h-15z M956.500 628 h15 M961.500 623.500 v10 M966.500 623.500 v10" fill="#8e8e8e" stroke="#c9c9c9" stroke-width="1.300"/>
  <!-- brushes -->
  <path d="M959 655 h10 l-1 9 h-8z" fill="#c9c9c9"/>
  <path d="M961 654 l-2-5 M964 654 v-7 M967 654 l3-5" stroke="#c9c9c9" stroke-width="1.300" fill="none"/>
  <circle cx="958.500" cy="648" r="1.800" fill="#c9c9c9"/><ellipse cx="964" cy="645.500" rx="1.300" ry="2.200" fill="#c9c9c9"/><circle cx="970.500" cy="648" r="1.800" fill="#c9c9c9"/>
  <!-- symbols club -->
  <circle cx="964" cy="679.500" r="3.400" fill="#c9c9c9"/><circle cx="960" cy="685" r="3.400" fill="#c9c9c9"/><circle cx="968" cy="685" r="3.400" fill="#c9c9c9"/>
  <path d="M964 684 c0 4-1 6-3 7 h6 c-2-1-3-3-3-7z" fill="#c9c9c9"/>
</svg>
<!-- column 2 -->
<div id="col2" style="left:984px;top:81px;width:39px;height:634px;background:#535353">
  <div style="left:0;top:40px;width:39px;height:1px;background:#3e3e3e"></div>
  <div style="left:0;top:109px;width:39px;height:1px;background:#3e3e3e"></div>
  <div style="left:0;top:177px;width:39px;height:1px;background:#3e3e3e"></div>
  <div style="left:0;top:620px;width:39px;height:1px;background:#3e3e3e"></div>
  <div class="grip" style="left:10px;top:3px;width:20px"></div>
  <div class="grip" style="left:10px;top:44px;width:20px"></div>
  <div class="grip" style="left:10px;top:113px;width:20px"></div>
</div>
<svg id="col2icons" style="left:985px;top:81px" width="38" height="200" viewBox="985 81 38 200">
  <circle cx="1004" cy="105" r="5.800" fill="#c9c9c9"/>
  <circle cx="1004" cy="105" r="8" fill="none" stroke="#c9c9c9" stroke-width="1" stroke-dasharray="1.800 1.500"/>
  <path d="M998 138.500 v15 l13-7.500z" fill="#c9c9c9"/>
  <rect x="995.500" y="169" width="11.500" height="8" rx="4" fill="none" stroke="#c9c9c9" stroke-width="2"/><rect x="1002" y="169" width="11.500" height="8" rx="4" fill="none" stroke="#c9c9c9" stroke-width="2"/><path d="M1003.200 171.800 v2.400 M1005.800 171.800 v2.400" stroke="#535353" stroke-width="1.400"/>
  <rect x="995.500" y="205.500" width="10" height="11.500" fill="#535353" stroke="#c9c9c9" stroke-width="1.200"/>
  <rect x="1000.500" y="212.500" width="12" height="9.500" fill="#535353" stroke="#c9c9c9" stroke-width="1.200"/>
  <path d="M1003 236 h-6 v14 h14 v-6" fill="none" stroke="#c9c9c9" stroke-width="2"/>
  <path d="M1003.500 243 l8-8 M1005.500 234.500 h6.500 v6.500" fill="none" stroke="#c9c9c9" stroke-width="2"/>
</svg>

<!-- ===== PROPERTIES PANEL ===== -->
<div id="props" style="left:1025px;top:81px;width:251px;height:635px;background:#535353;border-right:1px solid #3c3c3c;border-bottom:1px solid #3c3c3c">
  <div style="left:0;top:0;width:250px;height:27px;background:#424242"></div>
  <div style="left:0;top:0;width:43px;height:28px;background:#535353"></div>
  <span class="t" style="left:10px;top:8px;font-size:12.5px;color:#f0f0f0">属性</span>
  <span class="t" style="left:10px;top:40px;font-size:10px;color:#c8c8c8">未选择对象</span>
  <div style="left:0;top:60px;width:250px;height:1px;background:#4a4a4a"></div>
  <span class="t" style="left:10px;top:72px;font-size:10px;color:#c8c8c8">文档</span>
  <span class="t" style="left:40px;top:98px;width:50px;text-align:right;font-size:10px;color:#c8c8c8">单位 :</span>
  <div style="left:95.500px;top:92px;width:83.500px;height:20px;background:#4a4a4a;border:1px solid #646464;border-radius:3px"></div>
  <span class="t" style="left:102px;top:98px;font-size:10px;color:#f0f0f0;font-weight:bold">毫米</span>
  <svg style="left:164px;top:99px" width="10" height="7" viewBox="0 0 10 7"><path class="chev" d="M1.500 1.500 L5 5 L8.500 1.500"/></svg>
  <span class="t" style="left:40px;top:127px;width:50px;text-align:right;font-size:10px;color:#c8c8c8">画板 :</span>
  <div style="left:95.500px;top:120px;width:83.500px;height:21px;background:#4a4a4a;border:1px solid #646464;border-radius:3px"></div>
  <div style="left:97px;top:121px;width:63px;height:19px;background:#424242;border-right:1px solid #646464"></div>
  <span class="t" style="left:99px;top:124px;font-size:12px;color:#f0f0f0;font-family:'Liberation Mono',monospace">1</span>
  <svg style="left:164px;top:127px" width="10" height="7" viewBox="0 0 10 7"><path class="chev" d="M1.500 1.500 L5 5 L8.500 1.500"/></svg>
  <svg style="left:191px;top:126px" width="30" height="10" viewBox="0 0 30 10"><path d="M5.500 .500 v9 L.500 5z M22 .500 v9 L27 5z" fill="#6e6e6e"/></svg>
  <div style="left:95.500px;top:149px;width:83.500px;height:21px;border:1px solid #6e6e6e;border-radius:3px"></div>
  <span class="t" style="left:96px;top:156px;width:83px;text-align:center;font-size:10px;color:#f0f0f0;font-weight:bold">编辑画板</span>
  <div style="left:0;top:184px;width:250px;height:1px;background:#4a4a4a"></div>
  <span class="t" style="left:10px;top:200px;font-size:10px;color:#c8c8c8">标尺与网格</span>
  <div style="left:0;top:224px;width:250px;height:1px;background:#4a4a4a"></div>
  <span class="t" style="left:10px;top:240px;font-size:10px;color:#c8c8c8">参考线</span>
  <div style="left:96px;top:233px;width:22px;height:22px;background:#2e2e2e;border-radius:3px"></div>
  <div style="left:156px;top:233px;width:22px;height:22px;background:#2e2e2e;border-radius:3px"></div>
  <div style="left:0;top:264px;width:250px;height:1px;background:#4a4a4a"></div>
  <span class="t" style="left:10px;top:280px;font-size:10px;color:#c8c8c8">对齐选项</span>
  <div style="left:0;top:303px;width:250px;height:1px;background:#4a4a4a"></div>
  <span class="t" style="left:10px;top:315px;font-size:10px;color:#c8c8c8">首选项</span>
  <span class="t" style="left:10px;top:341px;font-size:10px;color:#c8c8c8">键盘增量 :</span>
  <div style="left:62px;top:332px;width:59px;height:21px;background:#424242;border:1px solid #5e5e5e;border-radius:3px"></div>
  <span class="t" style="left:67px;top:336px;font-size:12px;color:#f0f0f0;font-family:'Liberation Mono',monospace;letter-spacing:-1.2px">4 mm</span>
  <div style="left:11px;top:362px;width:12px;height:12px;border:1px solid #bdbdbd;border-radius:2px"></div>
  <span class="t" style="left:28px;top:364px;font-size:10px;color:#f0f0f0">使用预览边界</span>
  <div style="left:11px;top:386px;width:12px;height:12px;border:1px solid #bdbdbd;border-radius:2px;background:#d6d6d6"></div>
  <svg style="left:12px;top:387px" width="10" height="10" viewBox="0 0 10 10"><path d="M1.800 5 L4 7.500 L8.200 2" fill="none" stroke="#2a2a2a" stroke-width="1.600"/></svg>
  <span class="t" style="left:28px;top:388px;font-size:10px;color:#f0f0f0">缩放边角</span>
  <div style="left:11px;top:410px;width:12px;height:12px;border:1px solid #bdbdbd;border-radius:2px"></div>
  <span class="t" style="left:28px;top:412px;font-size:10px;color:#f0f0f0">缩放描边和效果</span>
  <div style="left:0;top:439px;width:250px;height:1px;background:#4a4a4a"></div>
  <span class="t" style="left:10px;top:456px;font-size:10px;color:#c4c4c4">快速操作</span>
  <div style="left:10px;top:475px;width:100px;height:21px;border:1px solid #6e6e6e;border-radius:3px"></div>
  <span class="t" style="left:10px;top:482px;width:100px;text-align:center;font-size:10px;color:#f0f0f0">文档设置</span>
  <div style="left:120px;top:475px;width:100px;height:21px;border:1px solid #6e6e6e;border-radius:3px"></div>
  <span class="t" style="left:120px;top:482px;width:100px;text-align:center;font-size:10px;color:#f0f0f0">首选项</span>
</div>
<svg id="propicons" style="left:1115px;top:270px" width="100" height="110" viewBox="1115 270 100 110">
  <!-- ruler -->
  <path d="M1124 277 h16.500 v4.500 h-12 v11 h-4.500z" fill="#c9c9c9"/>
  <path d="M1130.500 278.500 v1.500 M1133.500 278.500 v1.500 M1136.500 278.500 v1.500 M1125.500 283.500 h1.500 M1125.500 286.500 h1.500 M1125.500 289.500 h1.500" stroke="#535353" stroke-width="1.200" fill="none"/>
  <!-- grid -->
  <path d="M1154.500 277.500 h15 v15 h-15z M1159.500 277.500 v15 M1164.500 277.500 v15 M1154.500 282.500 h15 M1154.500 287.500 h15" fill="none" stroke="#c9c9c9" stroke-width="1.100"/>
  <!-- transparency grid -->
  <rect x="1184.500" y="277.500" width="15" height="15" fill="#787878" stroke="#c9c9c9" stroke-width="1.100"/>
  <path d="M1185 278h3.500v3.500h-3.500z M1192 278h3.500v3.500h-3.500z M1188.500 281.500h3.500v3.500h-3.500z M1195.500 281.500h3.500v3.500h-3.500z M1185 285h3.500v3.500h-3.500z M1192 285h3.500v3.500h-3.500z M1188.500 288.500h3.500v3.500h-3.500z M1195.500 288.500h3.500v3.500h-3.500z" fill="#a8a8a8"/>
  <!-- guides -->
  <path d="M1126.500 317 v16 M1130.500 317 v16 M1124 322.500 h16 M1124 329.500 h16" stroke="#f4f4f4" stroke-width="1.100" fill="none"/>
  <path d="M1157.500 318 v15 M1160.500 318 v15 M1154 322.500 h16 M1154 332.500 h9" stroke="#c9c9c9" stroke-width="1" fill="none"/>
  <rect x="1164" y="329" width="7" height="5" fill="#c9c9c9"/><path d="M1166 329 v-1.700 a2 2 0 0 1 4 -.3" fill="none" stroke="#c9c9c9" stroke-width="1.100"/>
  <path d="M1187.500 316.500 v16.500 M1184 322.500 h16 M1188 322.500 l5-4.500 M1188 322.500 l5 4.500" stroke="#f4f4f4" stroke-width="1.100" fill="none"/>
  <path d="M1200.500 324.500 l-5.500 5 h3 l-2 4.300 6-5.800 h-3z" fill="#f4f4f4"/>
  <!-- snap options -->
  <path d="M1126.500 358 v14" stroke="#c9c9c9" stroke-width="1.100"/><circle cx="1126.500" cy="364.500" r="1.500" fill="#535353" stroke="#c9c9c9" stroke-width="1"/>
  <path d="M1131 362 h4.700 a2.500 2.500 0 0 1 0 5 h-4.700" fill="none" stroke="#c9c9c9" stroke-width="2.300"/>
  <path d="M1133 360.500 v3 M1133 365.500 v3" stroke="#535353" stroke-width=".8"/>
  <path d="M1154.500 357.500 h4.500 v15 h-4.500z M1154.500 360.500 h4.500 M1154.500 363.500 h4.500 M1154.500 366.500 h4.500 M1154.500 369.500 h4.500 M1157 357.500 v15" fill="none" stroke="#c9c9c9" stroke-width="1"/>
  <path d="M1161 362 h4.700 a2.500 2.500 0 0 1 0 5 h-4.700" fill="none" stroke="#c9c9c9" stroke-width="2.300"/>
  <path d="M1163 360.500 v3 M1163 365.500 v3" stroke="#535353" stroke-width=".8"/>
  <path d="M1185 358h4v4h-4z M1185 363h4v4h-4z M1185 368h4v4h-4z" fill="#c9c9c9"/>
  <path d="M1191 362 h4.700 a2.500 2.500 0 0 1 0 5 h-4.700" fill="none" stroke="#c9c9c9" stroke-width="2.300"/>
  <path d="M1193 360.500 v3 M1193 365.500 v3" stroke="#535353" stroke-width=".8"/>
</svg>

<!-- ===== FLOATING PANELS ===== -->
<!-- rotate / reflect -->
<div id="fp1" style="left:233px;top:78px;width:70px;height:60px;background:#535353;border:1px solid #3a3a3a;border-radius:3px 3px 0 0;box-shadow:0 1px 4px rgba(0,0,0,.25)">
  <div class="hdr" style="left:0;top:0;width:68px;height:12px;border-radius:2px 2px 0 0;border-bottom:1px solid #3a3a3a"></div>
  <svg style="left:38px;top:4px" width="8" height="5" viewBox="0 0 9 7" preserveAspectRatio="none"><path d="M4 .500 L1 3.500 L4 6.500z M8.500 .500 L5.500 3.500 L8.500 6.500z" fill="#d6d6d6"/></svg>
  <svg style="left:57px;top:4px" width="7" height="7" viewBox="0 0 7 7"><path d="M.800 .800 L6.200 6.200 M6.200 .800 L.800 6.200" stroke="#c4c4c4" stroke-width="2" fill="none"/></svg>
  <div class="grip" style="left:24px;top:16px;width:20px"></div>
  <svg style="left:5px;top:33px" width="60" height="22" viewBox="238 111 60 22">
    <path d="M243.500 118 a7.200 7.200 0 0 1 13 4.500" fill="none" stroke="#c9c9c9" stroke-width="1.500"/>
    <path d="M241 114.500 v6.500 h6.500z" fill="#c9c9c9"/>
    <path d="M256.500 124 a7.200 7.200 0 0 1 -14.500 0" fill="none" stroke="#c9c9c9" stroke-width="1.300" stroke-dasharray="1.200 1.800"/>
    <path d="M270.500 116.500 v11 l5.500-5.500z" fill="none" stroke="#c9c9c9" stroke-width="1.200"/>
    <path d="M287 116 v12 l-6.500-6z" fill="#c9c9c9"/>
    <path d="M278.500 114 v17" stroke="#ececec" stroke-width="1" stroke-dasharray="1 1" fill="none"/>
  </svg>
</div>
<!-- shapes -->
<div id="fp2" style="left:124px;top:150px;width:40px;height:179px;background:#535353;border:1px solid #3a3a3a;border-radius:3px 3px 0 0">
  <div class="hdr" style="left:0;top:0;width:38px;height:12px;border-radius:2px 2px 0 0;border-bottom:1px solid #3a3a3a"></div>
  <svg style="left:9px;top:5px" width="8" height="5" viewBox="0 0 9 7" preserveAspectRatio="none"><path d="M.500 .500 L3.500 3.500 L.500 6.500z M5 .500 L8 3.500 L5 6.500z" fill="#d6d6d6"/></svg>
  <svg style="left:27px;top:4px" width="7" height="7" viewBox="0 0 7 7"><path d="M.800 .800 L6.200 6.200 M6.200 .800 L.800 6.200" stroke="#c4c4c4" stroke-width="2" fill="none"/></svg>
  <div class="grip" style="left:9px;top:16px;width:20px"></div>
  <svg style="left:5px;top:32px" width="30" height="145" viewBox="130 183 30 145">
    <rect x="136.500" y="188.500" width="15" height="13" fill="#6a6a6a" stroke="#c9c9c9" stroke-width="1.100"/>
    <rect x="136.500" y="212.500" width="15" height="13" rx="3" fill="#6a6a6a" stroke="#c9c9c9" stroke-width="1.100"/>
    <ellipse cx="144" cy="243" rx="8" ry="6.500" fill="#6a6a6a" stroke="#c9c9c9" stroke-width="1.100"/>
    <path d="M136 267 L140 260 h8 L152 267 L148 274 h-8z" fill="#6a6a6a" stroke="#c9c9c9" stroke-width="1.100"/>
    <path d="M144 283.500 l2.300 5 5.400.6 -4 3.700 1.100 5.400 -4.800-2.700 -4.800 2.700 1.100-5.400 -4-3.700 5.400-.6z" fill="#6a6a6a" stroke="#c9c9c9" stroke-width="1.100"/>
    <circle cx="144" cy="315" r="6.500" fill="none" stroke="#c9c9c9" stroke-width="1"/>
    <circle cx="145" cy="314" r="3.600" fill="#dcdcdc"/>
    <circle cx="138.500" cy="320.500" r="2" fill="#535353" stroke="#c9c9c9" stroke-width="1"/>
    <circle cx="150" cy="309" r="1" fill="#dcdcdc"/>
  </svg>
</div>
<!-- pen tools -->
<div id="fp3" style="left:842px;top:65px;width:130px;height:60px;background:#535353;border:1px solid #3a3a3a;border-radius:3px 3px 0 0;box-shadow:0 1px 4px rgba(0,0,0,.25)">
  <div class="hdr" style="left:0;top:0;width:128px;height:12px;border-radius:2px 2px 0 0;border-bottom:1px solid #3a3a3a"></div>
  <svg style="left:98px;top:4px" width="8" height="5" viewBox="0 0 9 7" preserveAspectRatio="none"><path d="M4 .500 L1 3.500 L4 6.500z M8.500 .500 L5.500 3.500 L8.500 6.500z" fill="#d6d6d6"/></svg>
  <svg style="left:117px;top:4px" width="7" height="7" viewBox="0 0 7 7"><path d="M.800 .800 L6.200 6.200 M6.200 .800 L.800 6.200" stroke="#c4c4c4" stroke-width="2" fill="none"/></svg>
  <div class="grip" style="left:54px;top:16px;width:20px"></div>
  <svg style="left:3px;top:33px" width="122" height="24" viewBox="846 99 122 24">
    <g id="pen1"><path d="M849.500 118 L852.500 109.500 L859 104.500 L864 109.500 L858.500 115.500 Z M860 103.500 L862.200 101.500 L867 106.200 L865 108.500 Z" fill="#c9c9c9"/><path d="M850 117.500 L856 111.500" stroke="#535353" stroke-width="1" fill="none"/></g>
    <g transform="translate(32 0)"><path d="M849.500 118 L852.500 109.500 L859 104.500 L864 109.500 L858.500 115.500 Z M860 103.500 L862.200 101.500 L867 106.200 L865 108.500 Z" fill="#c9c9c9"/><path d="M850 117.500 L856 111.500" stroke="#535353" stroke-width="1" fill="none"/></g>
    <path d="M876.500 106.500 h7 M880 103 v7" stroke="#d8d8d8" stroke-width="1.400" fill="none"/>
    <g transform="translate(62 0)"><path d="M849.500 118 L852.500 109.500 L859 104.500 L864 109.500 L858.500 115.500 Z M860 103.500 L862.200 101.500 L867 106.200 L865 108.500 Z" fill="#c9c9c9"/><path d="M850 117.500 L856 111.500" stroke="#535353" stroke-width="1" fill="none"/></g>
    <path d="M907 106 h7.500" stroke="#d8d8d8" stroke-width="1.400" fill="none"/>
    <path d="M943.500 118 V102.500 L955 114" fill="none" stroke="#c9c9c9" stroke-width="1.300"/>
  </svg>
</div>
<!-- eyedropper / measure -->
<div id="fp4" style="left:869px;top:125px;width:40px;height:84px;background:#535353;border:1px solid #3a3a3a;border-radius:3px 3px 0 0">
  <div class="hdr" style="left:0;top:0;width:38px;height:12px;border-radius:2px 2px 0 0;border-bottom:1px solid #3a3a3a"></div>
  <svg style="left:9px;top:5px" width="8" height="5" viewBox="0 0 9 7" preserveAspectRatio="none"><path d="M.500 .500 L3.500 3.500 L.500 6.500z M5 .500 L8 3.500 L5 6.500z" fill="#d6d6d6"/></svg>
  <svg style="left:27px;top:4px" width="7" height="7" viewBox="0 0 7 7"><path d="M.800 .800 L6.200 6.200 M6.200 .800 L.800 6.200" stroke="#c4c4c4" stroke-width="2" fill="none"/></svg>
  <div class="grip" style="left:9px;top:16px;width:20px"></div>
  <svg style="left:6px;top:33px" width="30" height="48" viewBox="876 159 30 48">
    <path d="M881 178 l1.500-4 l8-8 l2.500 2.500 l-8 8 z" fill="none" stroke="#c9c9c9" stroke-width="1.200"/>
    <path d="M890 165.500 l2.800-3 a2.100 2.100 0 0 1 3.100 3.100 l-3 2.800 l1 1 -1.200 1.200 -4.900-4.900 1.200-1.200z" fill="#c9c9c9"/>
    <path d="M881 197 L893.500 185.500 L897.500 190 L885 201.500 Z" fill="#c9c9c9"/>
    <path d="M885 193.500 l2 2 M888 190.500 l2 2 M891 188 l2 2" stroke="#535353" stroke-width="1" fill="none"/>
  </svg>
</div>

<!-- ===== WATERMARK ===== -->
<div id="wm" style="left:975px;top:580px;width:245px;height:120px;color:#d4d4d4;opacity:.93">
  <span class="t" style="left:7px;top:32px;font-size:51px;font-weight:bold;font-family:'Liberation Sans',sans-serif;transform:scaleX(1.04);transform-origin:0 0;letter-spacing:-1px">Bai</span>
  <svg style="left:80px;top:0" width="75" height="80" viewBox="1055 580 75 80">
    <g fill="#d4d4d4">
      <ellipse cx="1069.500" cy="611.500" rx="8" ry="10.500" transform="rotate(-12 1069.500 611.500)"/>
      <ellipse cx="1085.500" cy="595" rx="8" ry="11"/>
      <ellipse cx="1105.500" cy="596.500" rx="8" ry="11" transform="rotate(8 1105.500 596.500)"/>
      <ellipse cx="1119.500" cy="615.500" rx="7.500" ry="10.500" transform="rotate(14 1119.500 615.500)"/>
      <path d="M1093.500 610 c7 0 10 6 15 12 c5 6 13 9 13 19 c0 9-7 13.500-15 13 c-5-.3-9-1.500-13-1.500 c-4 0-8 1.200-13 1.500 c-8 .5-15-4-15-13 c0-10 8-13 13-19 c5-6 8-12 15-12z"/>
    </g>
    <text x="1074" y="648" font-family="Liberation Sans, sans-serif" font-weight="bold" font-size="28" fill="#555555" textLength="39" lengthAdjust="spacingAndGlyphs">du</text>
  </svg>
  <span class="t" style="left:155px;top:34px;font-size:38px;font-weight:900;font-family:'Noto Sans CJK SC',sans-serif;letter-spacing:0">经验</span>
  <span class="t" style="left:7px;top:81px;font-size:28.4px;font-family:'Liberation Sans',sans-serif;color:#e0e0e0">jingyan.baidu.com</span>
</div>

<div id="winframe" style="left:0;top:0;width:1280px;height:720px;border:1px solid #0a0a0a;border-right-color:#2e2e2e;border-radius:5px 5px 0 0;pointer-events:none"></div>
</body>
</html>
